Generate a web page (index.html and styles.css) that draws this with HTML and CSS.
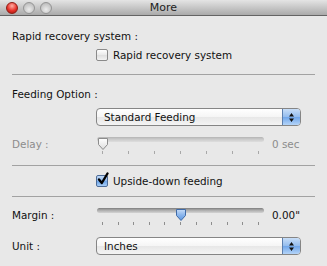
FILE: index.html
```html
<!DOCTYPE html>
<html lang="en">
<head>
  <meta charset="UTF-8">
  <title>More</title>
  <link rel="stylesheet" href="styles.css">
</head>
<body>

<div class="window">
  <div class="titlebar">
    <div class="lights">
      <span class="light close"></span>
      <span class="light"></span>
      <span class="light"></span>
    </div>
    <div class="title">More</div>
    <div></div>
  </div>

  <div class="content">
    <div class="heading">Rapid recovery system :</div>
    <div class="check-row">
      <span class="checkbox"></span>
      <span>Rapid recovery system</span>
    </div>

    <div class="sep"></div>

    <div class="heading heading-feed">Feeding Option :</div>
    <div class="popup-row popup-row-feed">
      <div class="popup">
        <span class="popup-text">Standard Feeding</span>
        <span class="popup-arrows">
          <svg width="7" height="11" viewBox="0 0 7 11"><path d="M3.5 1 L6 4.5 H1 Z M3.5 10 L6 6.5 H1 Z" fill="#111"/></svg>
        </span>
      </div>
    </div>

    <div class="slider-row disabled">
      <span class="label">Delay :</span>
      <div class="slider">
        <div class="track-area">
          <div class="track"></div>
          <svg class="knob" style="left: 0px" width="12" height="14" viewBox="0 0 12 14">
            <defs>
              <linearGradient id="kw" x1="0" y1="0" x2="0" y2="1">
                <stop offset="0" stop-color="#ffffff"/>
                <stop offset="1" stop-color="#dcdcdc"/>
              </linearGradient>
            </defs>
            <path d="M1.5 1.5 H10.5 V7.5 L6 12.5 L1.5 7.5 Z" fill="url(#kw)" stroke="#8c8c8c"/>
          </svg>
        </div>
        <div class="ticks">
          <i></i><i></i><i></i><i></i><i></i><i></i><i></i>
        </div>
      </div>
      <span class="value">0 sec</span>
    </div>

    <div class="sep sep-mid"></div>

    <div class="check-row check-row-upside">
      <span class="checkbox checked">
        <svg width="14" height="14" viewBox="0 0 14 14"><path d="M3 6.5 L5.8 10 L11.5 0.5" fill="none" stroke="#000" stroke-width="2.4" stroke-linecap="round" stroke-linejoin="round"/></svg>
      </span>
      <span>Upside-down feeding</span>
    </div>

    <div class="sep sep-low"></div>

    <div class="slider-row slider-row-margin">
      <span class="label">Margin :</span>
      <div class="slider">
        <div class="track-area">
          <div class="track"></div>
          <svg class="knob" style="left: 78px" width="12" height="14" viewBox="0 0 12 14">
            <defs>
              <linearGradient id="kb" x1="0" y1="0" x2="0" y2="1">
                <stop offset="0" stop-color="#c6dcf8"/>
                <stop offset="0.5" stop-color="#8ab5ec"/>
                <stop offset="1" stop-color="#5e98e2"/>
              </linearGradient>
            </defs>
            <path d="M1.5 1.5 H10.5 V7.5 L6 12.5 L1.5 7.5 Z" fill="url(#kb)" stroke="#3f6aa6"/>
          </svg>
        </div>
        <div class="ticks">
          <i></i><i></i><i></i><i></i><i></i><i></i><i></i><i></i><i></i><i></i><i></i>
        </div>
      </div>
      <span class="value">0.00"</span>
    </div>

    <div class="popup-row popup-row-unit">
      <span class="label">Unit :</span>
      <div class="popup">
        <span class="popup-text">Inches</span>
        <span class="popup-arrows">
          <svg width="7" height="11" viewBox="0 0 7 11"><path d="M3.5 1 L6 4.5 H1 Z M3.5 10 L6 6.5 H1 Z" fill="#111"/></svg>
        </span>
      </div>
    </div>
  </div>
</div>

</body>
</html>
```

FILE: styles.css
```css
body {
  margin: 0;
  font-family: "DejaVu Sans", sans-serif;
  font-size: 10.4px;
  color: #111;
}
.window {
  width: 327px;
  height: 266px;
  background: #e8e8e8;
  overflow: hidden;
}
.titlebar {
  height: 15px;
  border-bottom: 1px solid #646464;
  background: linear-gradient(#e4e4e4, #aaaaaa);
  display: grid;
  grid-template-columns: 1fr auto 1fr;
  align-items: center;
}
.lights {
  display: flex;
  gap: 5px;
  padding-left: 6px;
}
.light {
  width: 10px;
  height: 10px;
  border-radius: 50%;
  border: 1px solid #959595;
  background: radial-gradient(circle at 50% 65%, #ececec, #c2c2c2 70%, #a9a9a9);
}
.light.close {
  border-color: #8e1d15;
  background: radial-gradient(circle at 50% 30%, #ffb0a6, #e8322a 55%, #a0160f);
}
.title {
  font-size: 11px;
  color: #222;
  line-height: 15px;
}
.content {
  padding: 0 12px;
}
.heading {
  margin-top: 12px;
  height: 16px;
  line-height: 16px;
}
.heading-feed {
  margin-top: 11px;
}
.check-row {
  margin-top: 3px;
  height: 16px;
  padding-left: 84px;
  display: flex;
  align-items: center;
  gap: 5px;
}
.check-row-upside {
  margin-top: 7px;
}
.checkbox {
  width: 10px;
  height: 10px;
  border: 1px solid #8a8a8a;
  border-radius: 2px;
  background: linear-gradient(#ffffff, #e9e9e9 50%, #dedede 51%, #f3f3f3);
  position: relative;
}
.checkbox.checked {
  border-color: #4d6c98;
  background: linear-gradient(#c3dbf7, #8cb7ed 50%, #6aa2e8 51%, #a7cdf6);
}
.checkbox svg {
  position: absolute;
  left: -1px;
  top: -3px;
  overflow: visible;
}
.sep {
  margin-top: 11px;
  height: 1px;
  background: #a2a2a2;
}
.sep-mid {
  margin-top: 12px;
}
.sep-low {
  margin-top: 7px;
}
.popup-row {
  display: flex;
  align-items: center;
  height: 18px;
}
.popup-row-feed {
  margin-top: 6px;
  padding-left: 84px;
}
.popup-row-unit {
  margin-top: 13px;
}
.label {
  width: 84px;
  flex-shrink: 0;
}
.popup {
  width: 203px;
  height: 16px;
  border: 1px solid #858585;
  border-radius: 4px;
  background: linear-gradient(#ffffff, #f5f5f5 50%, #e7e7e7 51%, #f4f4f4);
  display: flex;
  align-items: center;
  overflow: hidden;
}
.popup-text {
  flex: 1;
  padding-left: 7px;
  line-height: 16px;
}
.popup-arrows {
  width: 17px;
  height: 16px;
  border-left: 1px solid #5c7fae;
  background: linear-gradient(#c8def8, #93bcee 50%, #70a6ea 51%, #b4d4f8);
  display: flex;
  align-items: center;
  justify-content: center;
}
.slider-row {
  margin-top: 7px;
  height: 20px;
  display: flex;
  align-items: flex-start;
}
.slider-row .label,
.slider-row .value {
  line-height: 22px;
}
.slider-row.disabled .label,
.slider-row.disabled .value {
  color: #8c8c8c;
}
.slider {
  width: 167px;
  margin: 2px 8px 0 1px;
}
.track-area {
  position: relative;
  height: 14px;
}
.track {
  margin-top: 2px;
  height: 5px;
  border-radius: 3px;
  background: linear-gradient(#7d7d7d, #a9a9a9 40%, #d4d4d4);
}
.disabled .track {
  background: linear-gradient(#b4b4b4, #c8c8c8 40%, #dedede);
}
.knob {
  position: absolute;
  top: 0;
}
.ticks {
  display: flex;
  justify-content: space-between;
  padding: 0 5px;
  height: 3px;
}
.ticks i {
  width: 1px;
  height: 3px;
  background: #8e8e8e;
}
.disabled .ticks i {
  background: #a8a8a8;
}
```
